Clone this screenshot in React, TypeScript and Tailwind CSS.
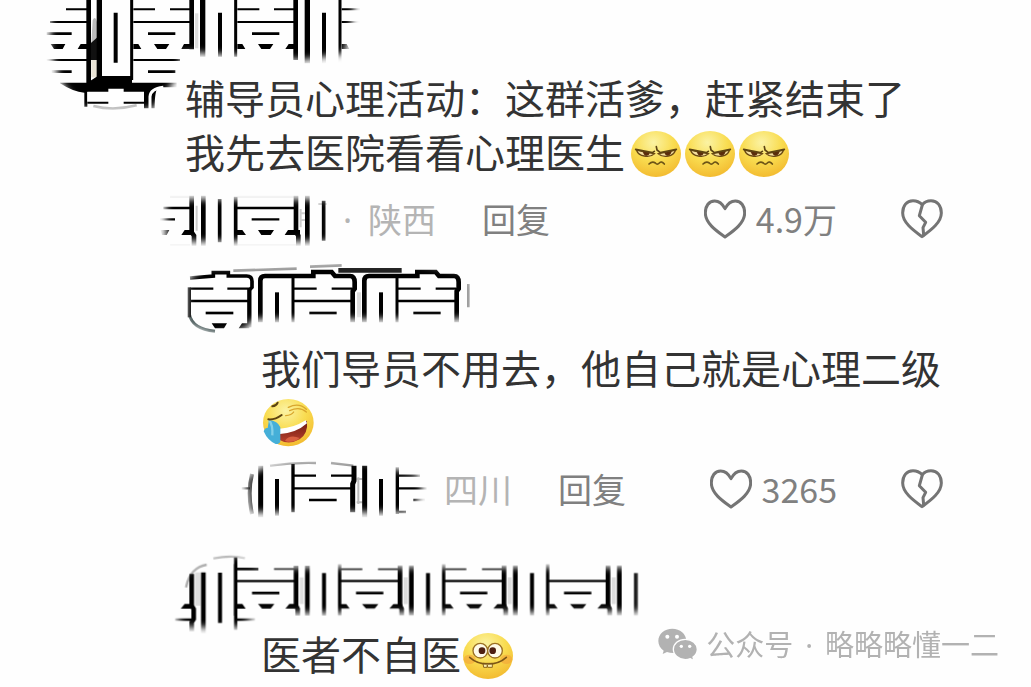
import type { ReactNode } from "react";

type BrushProps = {
	id: string;
	className: string;
	width: number;
	height: number;
	area: ReactNode;
	children: ReactNode;
};

// marker strokes over names and avatars, faded at the rim
function Brush({ id, className, width, height, area, children }: BrushProps) {
	return (
		<svg
			className={className}
			viewBox={`0 0 ${width} ${height}`}
			fill="none"
			stroke="#000"
			aria-hidden="true"
		>
			<defs>
				<filter id={`${id}-soft`} x="-20%" y="-20%" width="140%" height="140%">
					<feGaussianBlur stdDeviation="11" />
				</filter>
				<mask
					id={id}
					maskUnits="userSpaceOnUse"
					x="0"
					y="0"
					width={width}
					height={height}
				>
					<g fill="#fff" stroke="none" filter={`url(#${id}-soft)`}>
						{area}
					</g>
				</mask>
			</defs>
			<g mask={`url(#${id})`}>{children}</g>
		</svg>
	);
}

function AvatarBrush() {
	return (
		<Brush
			id="brush-avatar"
			className="absolute -left-[155px] top-0 w-[350px] h-[120px]"
			width={1050}
			height={360}
			area={
				<>
					<path d="M65 -40H450V215L400 290L370 325Q250 350 150 325L90 240L60 150Z" />
					<path d="M400 -40H985L945 160L820 180L500 158H400Z" />
				</>
			}
		>
			<path d="M188 60Q200 40 204 90V130H184Z" fill="#bbb" stroke="none" />
			<path d="M184 175H204V232H184Z" fill="#e9e4d6" stroke="none" />
			<path d="M182 130L204 110V180H182Z" fill="#111" stroke="none" />
			<path d="M500 40V145" stroke="#ddd" strokeWidth="10" />
			<path
				strokeWidth="6"
				d="M108 28H175M310 28H375M420 28H485M622 28H688M732 28H797M935 28H990M60 66H175M310 66H485M622 66H797M935 66H1000M50 180H175M310 180H450"
			/>
			<path
				strokeWidth="8"
				d="M50 101H125M354 101H436M666 101H748M65 215H125M354 215H436"
			/>
			<path
				fill="#000"
				stroke="none"
				d="M62 132H106L98 147H72ZM152 132H172V147H143ZM310 132H325L334 147H310ZM372 132H418L408 147H382ZM462 132H485V147H454ZM622 132H637L646 147H622ZM684 132H730L720 147H694ZM776 132H797V147H766ZM935 132H950L958 147H935Z"
			/>
			<path strokeWidth="14" d="M176 0V250M485 0V148M797 0V180" />
			<path strokeWidth="16" d="M518 0V170M832 0V190M208 0V236H306" />
			<path strokeWidth="12" d="M257 38V188M570 38V170M882 38V190" />
			<path strokeWidth="9" d="M305 0V240M617 0V170M930 0V190" />
			<path
				fill="#000"
				stroke="none"
				d="M90 248H172L200 230L225 240H306V248H440V262H385Q374 270 374 325H342V275H172V320H163V278Q130 276 90 250Z"
			/>
			<path fill="#fff" stroke="none" d="M172 276H235V266H281V276H341V305H281V320H235V305H172Z" />
			<path strokeWidth="6" d="M172 308H235M281 308H345" />
			<path stroke="#bbb" strokeWidth="8" d="M190 318Q250 334 320 316" />
			<path stroke="#fff" strokeWidth="9" d="M360 330V290Q362 266 400 262" />
		</Brush>
	);
}

function PlaceBrush() {
	return (
		<Brush
			id="brush-place"
			className="absolute -left-[35px] -top-[8px] w-[420px] h-[70px]"
			width={1260}
			height={210}
			area={<path d="M48 46H540V172H48Z" />}
		>
			<path
				stroke="#ccc"
				strokeWidth="6"
				d="M140 65V140M60 38H120M262 38H435M60 183H120M262 183H440M452 75V130M452 88H475M452 108H475M505 60H530"
			/>
			<path strokeWidth="7" d="M40 72H125M257 72H438M30 106H75M305 106H388" />
			<path
				fill="#000"
				stroke="none"
				d="M32 138H58L50 153H36ZM104 138H132V153H94ZM257 138H277L288 153H257ZM324 138H372L362 153H334ZM414 138H450V153H404Z"
			/>
			<path strokeWidth="14" d="M125 35V145L132 155V185M160 35V185M438 35V145L445 155V185M472 35V185" />
			<path strokeWidth="11" d="M209 45V175M521 50V170M257 38V185" />
		</Brush>
	);
}

function ReplyNameBrush() {
	return (
		<Brush
			id="brush-reply"
			className="absolute -left-[91px] top-[8px] w-[320px] h-[85px]"
			width={960}
			height={255}
			area={
				<path d="M50 80L100 40L500 22H700L880 50L910 95V170L870 195H250L225 225L130 240L50 210Z" />
			}
		>
			<path stroke="#999" strokeWidth="8" d="M190 50L380 44M420 38L515 34M895 90V160" />
			<path stroke="#222" strokeWidth="14" d="M505 49H695" />
			<path stroke="#ddd" strokeWidth="12" d="M567 115V190" />
			<path stroke="#455" strokeWidth="9" d="M58 180Q66 225 135 232" />
			<path strokeWidth="11" d="M60 72L130 66V56H175V66H230Q246 66 246 82V100L238 108" />
			<path strokeWidth="10" d="M58 100V190" />
			<path strokeWidth="13" d="M238 104V220" />
			<path strokeWidth="7" d="M62 104H130M172 104H238M62 141H238" />
			<path strokeWidth="8" d="M107 177H190" />
			<path fill="#000" stroke="none" d="M125 208H171L162 223H135ZM216 208H238V223H206Z" />
			{[0, 312].map((x) => (
				<g key={x} transform={`translate(${x} 0)`}>
					<path strokeWidth="14" d="M271 205V80Q271 66 285 66H430V54H485L495 66H540Q554 66 554 85V104L548 112V205" />
					<path strokeWidth="12" d="M321 115V205" />
					<path strokeWidth="9" d="M369 66V205" />
					<path strokeWidth="7" d="M372 104H440M485 104H548M372 141H548" />
					<path strokeWidth="8" d="M418 177H500" />
				</g>
			))}
		</Brush>
	);
}

function ReplyPlaceBrush() {
	return (
		<Brush
			id="brush-reply-place"
			className="absolute -left-[31px] -top-[13px] w-[410px] h-[80px]"
			width={1230}
			height={240}
			area={<path d="M45 90L90 60L190 32H370L560 75L580 130L530 190H60Z" />}
		>
			<path stroke="#999" strokeWidth="7" d="M120 50Q190 40 258 42M303 42L370 50" />
			<path stroke="#bbb" strokeWidth="6" d="M385 85V165M380 160H398M380 90H398" />
			<path strokeWidth="12" stroke="#444" d="M66 75Q52 130 66 195" />
			<path strokeWidth="15" d="M92 50V205M372 50V95L368 105V190M404 50V205" />
			<path strokeWidth="12" d="M141 90V200M453 90V200" />
			<path strokeWidth="10" d="M189 45V190M502 55V195" />
			<path strokeWidth="7" d="M189 80H258M303 80H372M502 80H570M35 118H60M189 118H372M502 118H590" />
			<path strokeWidth="8" d="M237 153H320M550 153H585M502 189H528" />
		</Brush>
	);
}

function LastNameBrush() {
	return (
		<Brush
			id="brush-last"
			className="absolute -left-[101px] top-[28px] w-[500px] h-[100px]"
			width={1500}
			height={300}
			area={
				<path d="M50 110L120 50L200 25L260 45L300 70H1440V203L290 208L240 250H80L50 225Z" />
			}
		>
			<path stroke="#aaa" strokeWidth="7" d="M160 43Q210 33 255 42M78 130Q90 70 140 62" />
			<path stroke="#ddd" strokeWidth="16" d="M113 85V185" />
			<path strokeWidth="14" d="M95 90V185L101 195V225L95 235V262M130 85V268" />
			<path strokeWidth="12" d="M180 86V237" />
			<path strokeWidth="10" d="M227 40V258" />
			<path strokeWidth="7" d="M45 227H100M227 227H285M227 75H295" />
			<path fill="#000" stroke="none" d="M74 180H100V194H62Z" />
			{[0, 312, 624, 936].map((x) => (
				<g key={x} transform={`translate(${x} 0)`}>
					<path stroke="#ddd" strokeWidth="12" d="M425 100V180" />
					<path strokeWidth="10" d="M227 60V215" />
					{x < 900 && <path strokeWidth="6" d="M227 75H295M342 75H408" />}
					<path strokeWidth="7" d="M227 111H408" />
					<path strokeWidth="8" d="M276 147H358" />
					<path
						fill="#000"
						stroke="none"
						d="M227 180H247L257 194H227ZM294 180H343L332 194H306ZM388 180H415V194H376Z"
					/>
					<path strokeWidth="14" d="M408 65V185L413 195V215M442 65V215" />
					<path strokeWidth="12" d="M492 87V215" />
				</g>
			))}
		</Brush>
	);
}

function Heart({ broken = false }: { broken?: boolean }) {
	return (
		<svg
			className="w-[42px] h-10"
			viewBox="0 0 126 120"
			fill="none"
			stroke="#747474"
			strokeWidth="9"
			strokeLinejoin="round"
			strokeLinecap="round"
			aria-hidden="true"
		>
			{broken ? (
				<>
					<path d="M64 17C54 7 44 5 36 5C17 5 5 20 5 42C5 72 40 96 63 113C86 96 121 72 121 42C121 20 109 5 90 5C80 5 70 9 64 17Z" />
					<path d="M64 18L55 50L74 70L66 86L68 108" />
				</>
			) : (
				<path d="M63 29C53 10 41 6 32 6C14 6 4 22 4 42C4 74 41 98 63 114C85 98 122 74 122 42C122 22 112 6 94 6C85 6 73 10 63 29Z" />
			)}
		</svg>
	);
}

function EmojiDefs() {
	return (
		<svg className="absolute w-0 h-0" aria-hidden="true">
			<defs>
				<radialGradient id="face" cx="45%" cy="25%" r="80%">
					<stop offset="0" stopColor="#fbf3a4" />
					<stop offset="0.5" stopColor="#f9dc50" />
					<stop offset="1" stopColor="#f2b72c" />
				</radialGradient>
				<linearGradient id="mouth" x1="0" y1="0" x2="0" y2="1">
					<stop offset="0" stopColor="#6d1a12" />
					<stop offset="1" stopColor="#b8402c" />
				</linearGradient>
			</defs>
		</svg>
	);
}

function Unamused() {
	return (
		<svg className="w-[54px] h-12" viewBox="0 0 162 144" fill="none" role="img" aria-label="白眼">
			<ellipse cx="81" cy="72" rx="75" ry="69" fill="url(#face)" />
			<path d="M22 60Q48 66 76 71Q64 82 46 78Q28 76 22 60ZM140 60Q114 66 88 71Q100 82 118 78Q134 76 140 60Z" fill="#f3dfa0" stroke="#6b4a14" strokeWidth="4" />
			<path d="M42 64L62 69Q60 79 50 77Q42 74 42 64ZM106 68L128 63Q126 76 116 77Q108 76 106 68Z" fill="#5a2d0c" />
			<path d="M20 58L70 68L76 64M142 58L94 68L84 60L82 50" stroke="#5c4413" strokeWidth="5" strokeLinecap="round" />
			<path d="M60 102Q70 92 79 99Q85 106 91 99Q98 92 106 102" stroke="#6d5416" strokeWidth="5" strokeLinecap="round" />
		</svg>
	);
}

function Laughing() {
	return (
		<svg className="w-[54px] h-[50px]" viewBox="0 0 162 150" fill="none" role="img" aria-label="笑哭">
			<ellipse cx="82" cy="74" rx="76" ry="71" fill="url(#face)" />
			<path d="M58 96Q102 98 138 68Q142 106 116 124Q84 142 56 126Z" fill="url(#mouth)" />
			<path d="M56 92Q98 90 134 67L138 76Q106 105 57 108Z" fill="#fff" />
			<path d="M72 128Q86 108 116 120Q94 138 72 128Z" fill="#d86041" />
			<path d="M24 66Q50 68 58 88V128Q58 138 44 138Q20 128 8 100Q12 88 20 90Z" fill="#45afd8" />
			<path d="M24 66Q36 80 34 112" stroke="#83d0e8" strokeWidth="7" />
			<path d="M22 64Q42 66 62 51M34 25Q46 24 50 14" stroke="#5c4310" strokeWidth="6" strokeLinecap="round" />
			<path d="M82 28Q114 12 136 34M86 38Q116 24 136 42M74 53Q92 52 98 42" stroke="#d9a62e" strokeWidth="4" strokeLinecap="round" />
		</svg>
	);
}

function Grinning() {
	return (
		<svg className="w-[54px] h-12" viewBox="0 0 162 144" fill="none" role="img" aria-label="龇牙">
			<ellipse cx="81" cy="72" rx="75" ry="69" fill="url(#face)" />
			<ellipse cx="26" cy="82" rx="18" ry="14" fill="#f3a33a" opacity="0.6" />
			<ellipse cx="136" cy="82" rx="18" ry="14" fill="#f3a33a" opacity="0.6" />
			<circle cx="58" cy="56" r="22" fill="#fffbe8" stroke="#9b7022" strokeWidth="4" />
			<circle cx="102" cy="56" r="22" fill="#fffbe8" stroke="#9b7022" strokeWidth="4" />
			<circle cx="63" cy="56" r="10" fill="#4e2013" />
			<circle cx="95" cy="56" r="10" fill="#4e2013" />
			<path d="M66 94H94V106H80L79 99L78 106H68Z" fill="#fbeeb0" stroke="#8f671c" strokeWidth="3" />
			<path d="M26 76Q48 96 81 96Q114 96 136 76" stroke="#7c5616" strokeWidth="5" strokeLinecap="round" />
		</svg>
	);
}

function WeChat() {
	return (
		<svg className="w-10 h-8" viewBox="0 0 120 96" fill="#b2b2b2" aria-hidden="true">
			<path d="M43 2C19 2 1 18 1 39C1 51 7 61 17 68L14 78L27 72Q35 75 46 75C67 75 85 59 85 39C85 18 66 2 43 2Z" />
			<path d="M82 34C61 34 46 48 46 64C46 81 62 95 82 95Q90 95 97 92L108 98L105 87C113 82 118 74 118 64C118 48 102 34 82 34Z" stroke="#fff" strokeWidth="4" />
			<g fill="#fff">
				<circle cx="28" cy="26" r="6" />
				<circle cx="57" cy="26" r="6" />
				<circle cx="70" cy="55" r="5" />
				<circle cx="95" cy="55" r="5" />
			</g>
		</svg>
	);
}

type MetaProps = {
	place: string;
	likes: string;
	children: ReactNode;
};

function Meta({ place, likes, children }: MetaProps) {
	return (
		<div className="flex items-center h-[54px] mt-[14px] text-[34px] leading-[54px] text-[#808080]">
			{children}
			<span className="text-[#b4b4b4]">{place}</span>
			<button className="ml-[46px]">回复</button>
			<div className="flex items-center gap-16 ml-auto">
				<button className="flex items-center gap-[10px]" aria-label={`赞 ${likes}`}>
					<Heart />
					<span>{likes}</span>
				</button>
				<button aria-label="踩">
					<Heart broken />
				</button>
			</div>
		</div>
	);
}

function App() {
	return (
		<main className="relative w-full min-h-screen pl-[185px] pr-[88px] overflow-hidden bg-[#fefefe] text-[#333] font-['Noto_Sans_CJK_SC','Noto_Sans',sans-serif]">
			<EmojiDefs />
			<article>
				<header className="relative h-[70px]">
					<AvatarBrush />
				</header>
				<p className="text-[40px] leading-[54px] whitespace-nowrap">
					辅导员心理活动：这群活爹，赶紧结束了
					<br />
					<span className="flex items-end">
						<span className="mr-1">我先去医院看看心理医生</span>
						<Unamused />
						<Unamused />
						<Unamused />
					</span>
				</p>
				<Meta place="陕西" likes="4.9万">
					<div className="relative w-[183px] h-[54px] pr-4 text-right text-[#b4b4b4]">
						<PlaceBrush />
						<span className="font-['Noto_Sans',sans-serif]">·</span>
					</div>
				</Meta>
			</article>

			<article className="pl-[76px]">
				<header className="relative h-[94px]">
					<ReplyNameBrush />
				</header>
				<p className="text-[40px] leading-[54px] whitespace-nowrap">
					我们导员不用去，他自己就是心理二级
					<span className="flex items-end h-[54px]">
						<Laughing />
					</span>
				</p>
				<Meta place="四川" likes="3265">
					<div className="relative w-[183px] h-[54px]">
						<ReplyPlaceBrush />
					</div>
				</Meta>
			</article>

			<article className="pl-[76px]">
				<header className="relative h-[110px]">
					<LastNameBrush />
				</header>
				<p className="flex items-end text-[40px] leading-[54px] whitespace-nowrap">
					<span>医者不自医</span>
					<Grinning />
				</p>
			</article>

			<footer className="absolute right-8 bottom-[22px] flex items-center text-[29px] leading-10 text-[#b2b2b2] whitespace-nowrap">
				<WeChat />
				<span className="ml-2">
					公众号
					<span className="mx-3 font-['Noto_Sans',sans-serif]">·</span>
					略略略懂一二
				</span>
			</footer>
		</main>
	);
}

export default App;
